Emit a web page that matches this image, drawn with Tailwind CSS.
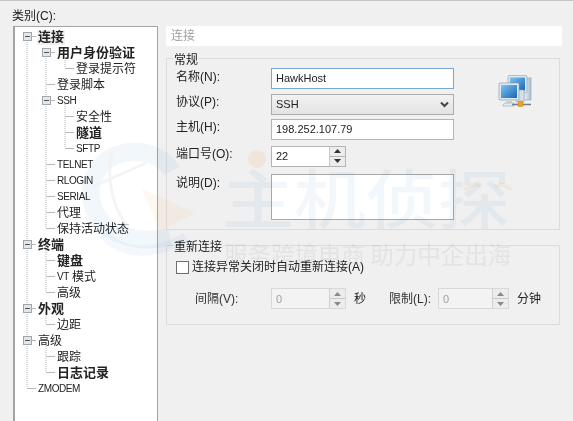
<!DOCTYPE html>
<html lang="zh-CN">
<head>
<meta charset="UTF-8">
<title>会话属性</title>
<script src="https://cdn.jsdelivr.net/npm/@tailwindcss/browser@4"></script>
</head>
<body class="bg-[#f0f0f0]">
<div class="relative w-[573px] h-[421px] overflow-hidden bg-[#f0f0f0] border-t border-[#c4c4c4] text-[12px] leading-4 text-[#222] blur-[0.35px] font-['Liberation_Sans','Noto_Sans_CJK_SC',sans-serif]">
  <div class="flex h-full pl-[13px]">

    <!-- Category tree -->
    <div class="w-[145px] shrink-0 pt-[7px]">
      <div class="h-[18px] -ml-px text-[12px]">类别(C):</div>
      <div class="relative h-[400px] bg-white border-l-2 border-t border-r border-[#a3a3a3] pt-[2px] pb-0">
        <svg class="absolute -left-[15px] -top-[27px]" width="160" height="420" fill="none">
          <g stroke="#b4b4b4" stroke-dasharray="1 1">
            <path d="M27 40V388M46 56V228M46 248V292M46 312V324M46 344V372M65 60V68M65 104V148"/>
          </g>
          <g stroke="#b8b8b8">
            <path d="M32 36.500H36M50 52.500H55M65 68.500H74M46 84.500H55M50 100.500H55M65 116.500H74M65 132.500H74M65 148.500H74M46 164.500H55M46 180.500H55M46 196.500H55M46 212.500H55M46 228.500H55M32 244.500H36M46 260.500H55M46 276.500H55M46 292.500H55M32 308.500H36M46 324.500H55M32 340.500H36M46 356.500H55M46 372.500H55M27 388.500H36"/>
          </g>
          <g fill="#e4e7ea" stroke="#a0a6ac">
            <rect x="23.500" y="32.500" width="8" height="8"/>
            <rect x="42.500" y="48.500" width="8" height="8"/>
            <rect x="42.500" y="96.500" width="8" height="8"/>
            <rect x="23.500" y="240.500" width="8" height="8"/>
            <rect x="23.500" y="304.500" width="8" height="8"/>
            <rect x="23.500" y="336.500" width="8" height="8"/>
          </g>
          <path stroke="#555" d="M25 36.500H30M44 52.500H49M44 100.500H49M25 244.500H30M25 308.500H30M25 340.500H30"/>
        </svg>
        <ul class="relative">
          <li class="h-4 pl-[23px] flex items-center"><span class="font-bold text-[13px] bg-[#f0f0f0] px-px -ml-px h-[15px] flex items-center">连接</span></li>
          <li class="h-4 pl-[42px] flex items-center font-bold text-[13px]">用户身份验证</li>
          <li class="h-4 pl-[61px] flex items-center">登录提示符</li>
          <li class="h-4 pl-[42px] flex items-center">登录脚本</li>
          <li class="h-4 pl-[42px] flex items-center text-[10px] tracking-[-0.4px]">SSH</li>
          <li class="h-4 pl-[61px] flex items-center">安全性</li>
          <li class="h-4 pl-[61px] flex items-center font-bold text-[13px]">隧道</li>
          <li class="h-4 pl-[61px] flex items-center text-[10px] tracking-[-0.4px]">SFTP</li>
          <li class="h-4 pl-[42px] flex items-center text-[10px] tracking-[-0.4px]">TELNET</li>
          <li class="h-4 pl-[42px] flex items-center text-[10px] tracking-[-0.4px]">RLOGIN</li>
          <li class="h-4 pl-[42px] flex items-center text-[10px] tracking-[-0.4px]">SERIAL</li>
          <li class="h-4 pl-[42px] flex items-center">代理</li>
          <li class="h-4 pl-[42px] flex items-center">保持活动状态</li>
          <li class="h-4 pl-[23px] flex items-center font-bold text-[13px]">终端</li>
          <li class="h-4 pl-[42px] flex items-center font-bold text-[13px]">键盘</li>
          <li class="h-4 pl-[42px] flex items-center"><span class="text-[10px] tracking-[-0.4px] mr-[3px]">VT</span>模式</li>
          <li class="h-4 pl-[42px] flex items-center">高级</li>
          <li class="h-4 pl-[23px] flex items-center font-bold text-[13px]">外观</li>
          <li class="h-4 pl-[42px] flex items-center">边距</li>
          <li class="h-4 pl-[23px] flex items-center">高级</li>
          <li class="h-4 pl-[42px] flex items-center">跟踪</li>
          <li class="h-4 pl-[42px] flex items-center font-bold text-[13px]">日志记录</li>
          <li class="h-4 pl-[23px] flex items-center text-[10px] tracking-[-0.4px]">ZMODEM</li>
        </ul>
      </div>
    </div>

    <!-- Settings pane -->
    <div class="w-[396px] ml-[8px] pt-[25px]">
      <div class="h-[20px] bg-white pl-[5px] flex items-center text-[#a0a0a0] text-[12px]">连接</div>

      <fieldset class="mt-[5px] w-[394px] h-[179px] border border-[#dcdcdc] pl-[9px] rounded-[1px] relative">
        <legend class="-ml-[3px] px-px h-[14px] leading-[18px]">常规</legend>
        <div class="flex flex-col">
          <div class="flex items-center h-[20px] mt-[3px]">
            <span class="w-[95px] -mt-[2px]">名称(N):</span>
            <div class="w-[183px] h-[21px] bg-white border border-[#7ba7d1] pl-[4px] flex items-center text-[11px]">HawkHost</div>
          </div>
          <div class="flex items-center h-[20px] mt-[6px]">
            <span class="w-[95px] -mt-[4px]">协议(P):</span>
            <div class="w-[183px] h-[21px] bg-gradient-to-b from-[#f2f2f2] to-[#e3e3e3] border border-[#acacac] pl-[4px] pr-[4px] flex items-center justify-between text-[11px]">
              SSH
              <svg width="9" height="7" fill="none" stroke="#444" stroke-width="2"><path d="M1 1.500L4.500 5L8 1.500"/></svg>
            </div>
          </div>
          <div class="flex items-center h-[20px] mt-[5px]">
            <span class="w-[95px] -mt-[4px]">主机(H):</span>
            <div class="w-[183px] h-[21px] bg-white border border-[#b4b4b4] pl-[4px] flex items-center text-[11px]">198.252.107.79</div>
          </div>
          <div class="flex items-center h-[20px] mt-[7px]">
            <span class="w-[95px] -mt-[4px]">端口号(O):</span>
            <div class="w-[75px] h-[21px] bg-white border border-[#b4b4b4] pl-[4px] flex items-center justify-between text-[11px]">
              22
              <div class="w-[16px] h-full flex flex-col border-l border-[#c8c8c8] bg-[#ececec]">
                <div class="flex-1 flex items-center justify-center border-b border-[#b4b4b4]"><svg width="7" height="4" fill="#333"><path d="M3.500 0L7 4H0Z"/></svg></div>
                <div class="flex-1 flex items-center justify-center"><svg width="7" height="4" fill="#333"><path d="M0 0H7L3.500 4Z"/></svg></div>
              </div>
            </div>
          </div>
          <div class="flex items-start h-[46px] mt-[8px]">
            <span class="w-[95px] mt-px">说明(D):</span>
            <div class="w-[183px] h-[46px] bg-white border border-[#a8a8a8]"></div>
          </div>
        </div>
        <!-- session icon -->
        <svg class="absolute left-[331px] top-[10px]" width="34" height="34" viewBox="0 0 34 34">
          <defs>
            <linearGradient id="scr" x1="0" y1="0" x2="1" y2="1"><stop offset="0" stop-color="#7fc4ee"/><stop offset="1" stop-color="#1667b8"/></linearGradient>
            <linearGradient id="body" x1="0" y1="0" x2="1" y2="0"><stop offset="0" stop-color="#eef3f7"/><stop offset="1" stop-color="#a9bccb"/></linearGradient>
          </defs>
          <rect x="26" y="3" width="7" height="22" fill="url(#body)" stroke="#8fa3b3" stroke-width=".6"/>
          <rect x="10" y="0.500" width="19" height="17" rx="1" fill="#dbe6ee" stroke="#8fa3b3" stroke-width=".6"/>
          <rect x="12" y="2.500" width="15" height="13" fill="url(#scr)"/>
          <rect x="18" y="15" width="8" height="12" fill="#d6e0e8" stroke="#8fa3b3" stroke-width=".5"/>
          <rect x="1" y="8" width="20" height="17" rx="1" fill="#dfe8ef" stroke="#7f94a5" stroke-width=".6"/>
          <rect x="3" y="10" width="16" height="13" fill="url(#scr)"/>
          <rect x="8" y="25" width="6" height="3" fill="#c9d5de"/>
          <path d="M5 31C5 28 7 28 11 28H16V31H5Z" fill="#e6edf2" stroke="#8fa3b3" stroke-width=".6"/>
          <path d="M14 29.500H33" stroke="#6f7f8c" stroke-width="1.500"/>
          <rect x="20" y="26" width="5" height="5.500" rx="1" fill="#eda12d" stroke="#c57c12" stroke-width=".5"/>
        </svg>
      </fieldset>

      <fieldset class="mt-[8px] w-[394px] h-[87px] border border-[#dcdcdc] pl-[9px] rounded-[1px]">
        <legend class="-ml-[3px] px-px h-[14px] leading-[18px]">重新连接</legend>
        <div class="flex items-center h-[16px] mt-[7px]">
          <div class="w-[13px] h-[13px] bg-white border border-[#6e6e6e]"></div>
          <span class="ml-[3px]">连接异常关闭时自动重新连接(A)</span>
        </div>
        <div class="flex items-center h-[21px] mt-[13px] pl-[19px]">
          <span class="w-[76px] text-[#333]">间隔(V):</span>
          <div class="w-[75px] h-[21px] bg-[#f3f3f3] border border-[#d8d8d8] pl-[4px] flex items-center justify-between text-[11px] text-[#a0a0a0]">
            0
            <div class="w-[16px] h-full flex flex-col border-l border-[#d0d0d0] bg-[#ececec]">
              <div class="flex-1 flex items-center justify-center border-b border-[#c8c8c8]"><svg width="7" height="4" fill="#888"><path d="M3.500 0L7 4H0Z"/></svg></div>
              <div class="flex-1 flex items-center justify-center"><svg width="7" height="4" fill="#888"><path d="M0 0H7L3.500 4Z"/></svg></div>
            </div>
          </div>
          <span class="ml-[8px] w-[35px]">秒</span>
          <span class="w-[49px] text-[#333]">限制(L):</span>
          <div class="w-[71px] h-[21px] bg-[#f3f3f3] border border-[#d8d8d8] pl-[4px] flex items-center justify-between text-[11px] text-[#a0a0a0]">
            0
            <div class="w-[16px] h-full flex flex-col border-l border-[#d0d0d0] bg-[#ececec]">
              <div class="flex-1 flex items-center justify-center border-b border-[#c8c8c8]"><svg width="7" height="4" fill="#888"><path d="M3.500 0L7 4H0Z"/></svg></div>
              <div class="flex-1 flex items-center justify-center"><svg width="7" height="4" fill="#888"><path d="M0 0H7L3.500 4Z"/></svg></div>
            </div>
          </div>
          <span class="ml-[8px]">分钟</span>
        </div>
      </fieldset>
    </div>
  </div>

  <!-- Watermark laid over the dialog -->
  <div class="absolute inset-0 pointer-events-none">
    <svg class="absolute left-0 top-0" width="573" height="421" fill="none">
      <path d="M172 170C158 146 118 144 100 166C82 188 92 222 118 232C136 240 150 240 170 236" stroke="#1e78c8" stroke-opacity=".06" stroke-width="18"/>
      <path d="M102 232C124 256 158 254 186 236" stroke="#1e78c8" stroke-opacity=".05" stroke-width="10"/>
      <path d="M142 188L195 212L160 230Z" fill="#f0a040" fill-opacity=".08"/>
      <path d="M112 150C106 176 112 206 128 226M92 186L146 162" stroke="#f0f0f0" stroke-opacity=".7" stroke-width="3"/>
      <circle cx="257" cy="158" r="9" fill="#f0a040" fill-opacity=".12"/>
      <path d="M465 189Q473 180 481 186M495 186Q503 180 511 189" stroke="#f0a040" stroke-opacity=".1" stroke-width="4"/>
    </svg>
    <div class="absolute left-[222px] top-[148px] origin-bottom scale-y-[0.88] text-[72px] leading-[84px] text-[#1e78c8]/6 font-medium whitespace-nowrap font-['Noto_Sans_CJK_SC',sans-serif]">主机侦探</div>
    <div class="absolute left-[224px] top-[239px] text-[23.500px] leading-[28px] text-[#777]/10 whitespace-nowrap font-['Noto_Sans_CJK_SC',sans-serif]">服务跨境电商 助力中企出海</div>
  </div>
</div>
</body>
</html>
